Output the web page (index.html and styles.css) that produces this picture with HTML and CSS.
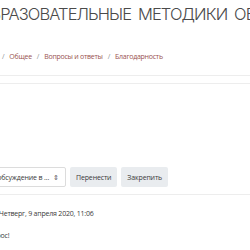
FILE: index.html
```html
<!DOCTYPE html>
<html lang="ru">
<head>
  <meta charset="UTF-8">
  <meta name="viewport" content="width=device-width, initial-scale=1.0">
  <link rel="stylesheet" href="styles.css">
</head>
<body>
  <div class="page">

    <header class="page-header">
      <h1 class="course-title">ОБРАЗОВАТЕЛЬНЫЕ МЕТОДИКИ ОБУЧЕНИЯ</h1>
      <nav class="breadcrumb">
        <span class="sep">/</span>
        <a href="#">Общее</a>
        <span class="sep">/</span>
        <a href="#">Вопросы и ответы</a>
        <span class="sep">/</span>
        <a href="#">Благодарность</a>
      </nav>
    </header>

    <div class="content">
      <div class="discussion-controls">
        <div class="select-box">
          <span>Переместить обсуждение в ...</span>
          <span class="caret">&#8661;</span>
        </div>
        <button class="btn">Перенести</button>
        <button class="btn">Закрепить</button>
      </div>

      <article class="post">
        <div class="post-date">Четверг, 9 апреля 2020, 11:06</div>
        <div class="post-text">Спасибо за вопрос!</div>
      </article>
    </div>

  </div>
</body>
</html>
```

FILE: styles.css
```css
:root {
  --text-color: #3a3a3a;
  --link-color: #9a5250;
  --muted: #8a8f95;
  --border-color: #ededed;
  --btn-bg: #e9ecef;
}

body {
  margin: 0;
  background: #fff;
  color: var(--text-color);
  font-family: 'Open Sans', 'Noto Sans', sans-serif;
  overflow: hidden;
}

.page {
  width: 250px;
  overflow: hidden;
}

.page-header {
  padding-top: 1px;
  border-bottom: 1px solid var(--border-color);
  height: 74px;
}

.course-title {
  margin: 0 0 0 -21px;
  font-family: 'Inter', 'Open Sans', sans-serif;
  font-size: 16.5px;
  font-weight: 300;
  letter-spacing: -0.9px;
  word-spacing: 3px;
  white-space: nowrap;
  color: #4a4a4a;
  line-height: 26px;
}

.breadcrumb {
  display: flex;
  gap: 5px;
  margin-top: 25px;
  padding-left: 2px;
  font-size: 7px;
  letter-spacing: -0.25px;
  white-space: nowrap;
}

.breadcrumb a {
  color: var(--link-color);
  text-decoration: none;
}

.breadcrumb .sep {
  color: var(--muted);
}

.content {
  margin-top: 7px;
  border-top: 1px solid var(--border-color);
  padding-top: 83px;
}

.discussion-controls {
  display: flex;
  gap: 4px;
  align-items: center;
  height: 20px;
  padding-bottom: 7px;
  border-bottom: 1px solid var(--border-color);
}

.select-box {
  display: flex;
  justify-content: flex-end;
  align-items: center;
  gap: 4px;
  width: 62px;
  height: 18px;
  margin-left: -10px;
  padding: 0 6px;
  border: 1px solid #dcdcdc;
  border-radius: 2px;
  font-size: 7px;
  letter-spacing: -0.15px;
  white-space: nowrap;
  overflow: hidden;
}

.select-box .caret {
  font-size: 7px;
  color: #555;
}

.btn {
  height: 20px;
  padding: 0 6px;
  border: none;
  border-radius: 2px;
  background: var(--btn-bg);
  color: var(--text-color);
  font-family: inherit;
  font-size: 7px;
  letter-spacing: -0.15px;
}

.post {
  padding-top: 14px;
  font-size: 7px;
  letter-spacing: -0.2px;
}

.post-date {
  margin-left: -1px;
}

.post-text {
  margin-top: 13px;
  margin-left: -53px;
}
```
